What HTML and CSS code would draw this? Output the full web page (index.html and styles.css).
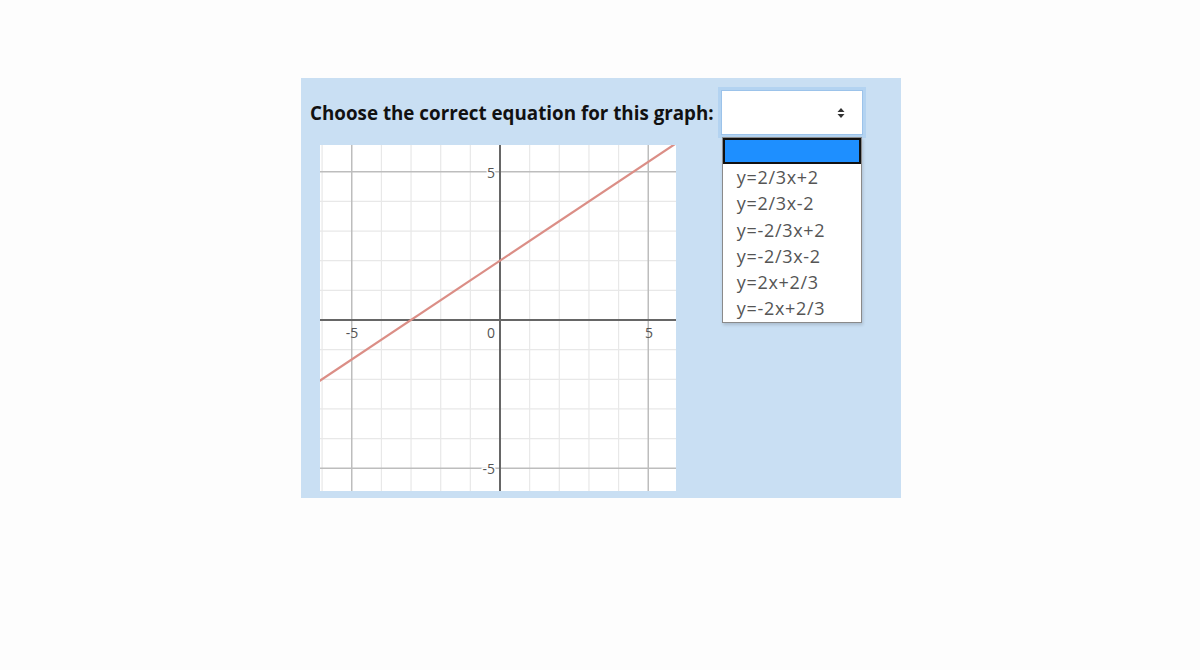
FILE: index.html
```html
<!DOCTYPE html>
<html lang="en">
<head>
  <meta charset="UTF-8" />
  <title>Graph Quiz</title>
  <link rel="stylesheet" href="styles.css">
</head>
<body>
  <div class="quiz">
    <div class="question">
      <span class="prompt">Choose the correct equation for this graph:</span>
      <div class="picker">
        <div class="picker-box">
          <svg class="arrows" width="8" height="12" viewBox="0 0 8 12">
            <path d="M4 1 L7.5 5 H0.5 Z M4 11 L7.5 7 H0.5 Z" fill="#333"/>
          </svg>
        </div>
        <ul class="options">
          <li class="selected"></li>
          <li>y=2/3x+2</li>
          <li>y=2/3x-2</li>
          <li>y=-2/3x+2</li>
          <li>y=-2/3x-2</li>
          <li>y=2x+2/3</li>
          <li>y=-2x+2/3</li>
        </ul>
      </div>
    </div>

    <svg class="graph" width="356" height="346" viewBox="0 0 356 346">
      <rect width="356" height="346" fill="#fff"/>
      <!-- unit grid, origin at (180,175), 29.65px per unit -->
      <g transform="translate(180 175) scale(29.65 -29.65)" fill="none">
        <g stroke="#e8e8e8" stroke-width="1.2">
          <line x1="-6" y1="-7" x2="-6" y2="7" vector-effect="non-scaling-stroke"/>
          <line x1="-4" y1="-7" x2="-4" y2="7" vector-effect="non-scaling-stroke"/>
          <line x1="-3" y1="-7" x2="-3" y2="7" vector-effect="non-scaling-stroke"/>
          <line x1="-2" y1="-7" x2="-2" y2="7" vector-effect="non-scaling-stroke"/>
          <line x1="-1" y1="-7" x2="-1" y2="7" vector-effect="non-scaling-stroke"/>
          <line x1="1" y1="-7" x2="1" y2="7" vector-effect="non-scaling-stroke"/>
          <line x1="2" y1="-7" x2="2" y2="7" vector-effect="non-scaling-stroke"/>
          <line x1="3" y1="-7" x2="3" y2="7" vector-effect="non-scaling-stroke"/>
          <line x1="4" y1="-7" x2="4" y2="7" vector-effect="non-scaling-stroke"/>
          <line x1="-7" y1="4" x2="7" y2="4" vector-effect="non-scaling-stroke"/>
          <line x1="-7" y1="3" x2="7" y2="3" vector-effect="non-scaling-stroke"/>
          <line x1="-7" y1="2" x2="7" y2="2" vector-effect="non-scaling-stroke"/>
          <line x1="-7" y1="1" x2="7" y2="1" vector-effect="non-scaling-stroke"/>
          <line x1="-7" y1="-1" x2="7" y2="-1" vector-effect="non-scaling-stroke"/>
          <line x1="-7" y1="-2" x2="7" y2="-2" vector-effect="non-scaling-stroke"/>
          <line x1="-7" y1="-3" x2="7" y2="-3" vector-effect="non-scaling-stroke"/>
          <line x1="-7" y1="-4" x2="7" y2="-4" vector-effect="non-scaling-stroke"/>
        </g>
        <g stroke="#bdbdbd" stroke-width="1.5">
          <line x1="-5" y1="-7" x2="-5" y2="7" vector-effect="non-scaling-stroke"/>
          <line x1="5" y1="-7" x2="5" y2="7" vector-effect="non-scaling-stroke"/>
          <line x1="-7" y1="5" x2="7" y2="5" vector-effect="non-scaling-stroke"/>
          <line x1="-7" y1="-5" x2="7" y2="-5" vector-effect="non-scaling-stroke"/>
        </g>
        <g stroke="#666" stroke-width="2">
          <line x1="0" y1="-7" x2="0" y2="7" vector-effect="non-scaling-stroke"/>
          <line x1="-7" y1="0" x2="7" y2="0" vector-effect="non-scaling-stroke"/>
        </g>
        <!-- y = 2/3x + 2 -->
        <line x1="-6.5" y1="-2.333" x2="6.5" y2="6.333" stroke="#db8e86" stroke-width="2.2" vector-effect="non-scaling-stroke"/>
      </g>
      <g class="ticks">
        <text x="175" y="27" class="ylabel">5</text>
        <text x="175" y="323" class="ylabel">-5</text>
        <text x="175" y="193" text-anchor="end">0</text>
        <text x="32" y="193" text-anchor="middle">-5</text>
        <text x="329" y="193" text-anchor="middle">5</text>
      </g>
    </svg>
  </div>
</body>
</html>
```

FILE: styles.css
```css
body {
  margin: 0;
  background: #fdfdfd;
  font-family: "Open Sans", Arial, sans-serif;
}
.quiz {
  width: 600px;
  height: 420px;
  margin: 78px 0 0 301px;
  padding: 12px 0 0 9px;
  box-sizing: border-box;
  background: #c9dff3;
}
.question {
  display: flex;
  align-items: center;
  gap: 7px;
}
.prompt {
  font-size: 18.8px;
  font-weight: bold;
  color: #111;
}
.picker {
  position: relative;
}
.picker-box {
  width: 142px;
  height: 45px;
  box-sizing: border-box;
  background: #fff;
  border: 1px solid #9cc3ea;
  box-shadow: 0 0 0 3px #b3d3f1;
  display: flex;
  align-items: center;
  justify-content: flex-end;
  padding-right: 17px;
}
.options {
  position: absolute;
  top: 47px;
  left: 1px;
  width: 140px;
  margin: 0;
  padding: 0;
  list-style: none;
  background: #fff;
  border: 1px solid #8a8a8a;
  box-sizing: border-box;
  box-shadow: 1px 2px 3px rgba(0,0,0,0.15);
  font-size: 18px;
  letter-spacing: 0.7px;
  color: #555;
}
.options li {
  height: 26.3px;
  line-height: 26px;
  padding-left: 14px;
}
.options li.selected {
  background: #1e8fff;
  border: 2px solid #111;
  box-sizing: border-box;
  height: 26px;
}
.graph {
  display: block;
  margin: 10px 0 0 10px;
}
.ticks text {
  font-family: "Open Sans", Arial, sans-serif;
  font-size: 14px;
  fill: #555;
}
.ticks .ylabel {
  text-anchor: end;
  dominant-baseline: central;
  paint-order: stroke;
  stroke: #fff;
  stroke-width: 3px;
}
```
